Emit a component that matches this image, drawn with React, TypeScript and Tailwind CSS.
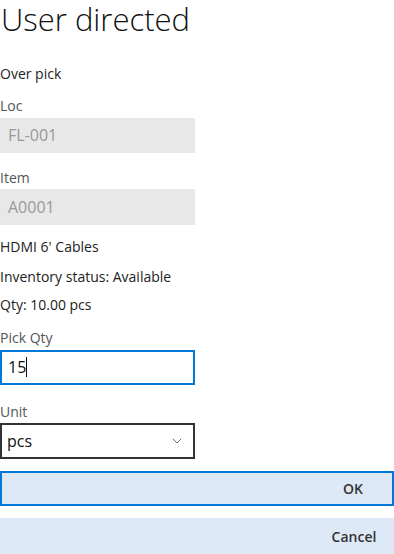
import { ChevronDown } from "lucide-react";

const font = { fontFamily: '"Open Sans", "Noto Sans", sans-serif' };

function Label({ text, className = "" }: { text: string; className?: string }) {
  return (
    <div className={`h-6 flex items-center text-[14px] text-[#555] ${className}`}>{text}</div>
  );
}

function Line({ text, className = "" }: { text: string; className?: string }) {
  return (
    <div className={`h-6 flex items-center text-[14px] text-[#222] ${className}`}>{text}</div>
  );
}

function ReadOnlyField({ value }: { value: string }) {
  return (
    <div className="w-[195px] h-9 bg-[#e8e8e8] flex items-center pl-2 text-[16px] text-[#999]">
      {value}
    </div>
  );
}

export default function App() {
  return (
    <div className="w-[394px] h-[554px] bg-white overflow-hidden flex flex-col" style={font}>
      <h1 className="h-[38px] text-[31px] font-light text-[#111] leading-[38px] pl-px">User directed</h1>

      <Line text="Over pick" className="mt-[24px]" />

      <Label text="Loc" className="mt-2" />
      <ReadOnlyField value="FL-001" />

      <Label text="Item" className="mt-3" />
      <ReadOnlyField value="A0001" />

      <Line text="HDMI 6' Cables" className="mt-[10px]" />
      <Line text="Inventory status: Available" className="mt-[6px]" />
      <Line text="Qty: 10.00 pcs" className="mt-[5px]" />

      <Label text="Pick Qty" className="mt-[9px]" />
      <div className="w-[195px] h-9 border-2 border-[#0078d7] flex items-center pl-[6px] text-[16px] text-[#111]">
        15<span className="w-px h-5 bg-[#111]" />
      </div>

      <Label text="Unit" className="mt-[14px]" />
      <div className="w-[195px] h-9 border-2 border-[#333] flex items-center justify-between pl-[5px] pr-2 text-[16px] text-[#111]">
        <span>pcs</span>
        <ChevronDown size={16} strokeWidth={1.25} className="text-[#555]" />
      </div>

      <button className="mt-3 h-9 w-full border-2 border-[#0078d7] bg-[#dde9f7] flex items-center justify-end" style={font}>
        <span className="w-[78px] text-center text-[14px] font-semibold text-[#333]">OK</span>
      </button>
      <button className="mt-3 h-9 w-full bg-[#dde9f7] flex items-center justify-end" style={font}>
        <span className="w-[80px] text-center text-[14px] font-semibold text-[#333]">Cancel</span>
      </button>
    </div>
  );
}
